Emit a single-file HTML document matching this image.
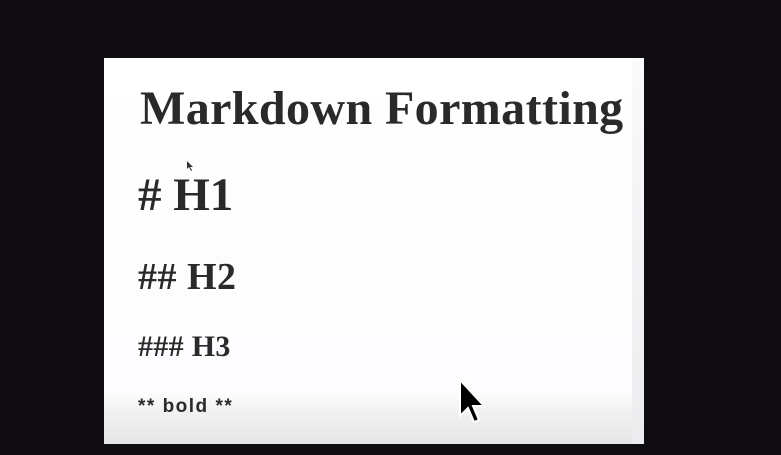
<!DOCTYPE html>
<html><head><style>
html,body{margin:0;padding:0;width:781px;height:455px;background:#0f0d11;overflow:hidden;position:relative}
.card{position:absolute;left:104px;top:58px;width:540px;height:386px;background:linear-gradient(to bottom,#fff 0,#fdfcfe 335px,#f3f3f4 350px,#e6e6e8 386px)}
.strip{position:absolute;left:632px;top:58px;width:12px;height:386px;background:linear-gradient(to bottom,#fafafb,#ececee)}
.t{position:absolute;font-family:"Liberation Serif",serif;font-weight:bold;color:#2a2a2c;white-space:nowrap;line-height:1}
</style></head><body>
<div class="card"></div>
<div class="strip"></div>
<div class="t" style="left:140px;top:85px;font-size:48px;letter-spacing:0.4px">Markdown Formatting</div>
<div class="t" style="left:138px;top:172px;font-size:47px">#&nbsp;H1</div>
<div class="t" style="left:138px;top:258px;font-size:38px;letter-spacing:0.5px">##&nbsp;H2</div>
<div class="t" style="left:138px;top:332px;font-size:30px;letter-spacing:0.3px">###&nbsp;H3</div>
<div class="t" style="left:138px;top:397px;font-size:19px;letter-spacing:1.5px;font-family:'Liberation Sans',sans-serif">** bold **</div>
<svg style="position:absolute;left:458px;top:378px" width="30" height="48" viewBox="0 0 30 48">
<path d="M2 2 L2 38 L10 30 L16 44 L21 42 L15 28 L26 28 Z" fill="#000" stroke="#fff" stroke-width="2"/>
</svg>
<svg style="position:absolute;left:186px;top:160px" width="8" height="12" viewBox="0 0 8 12">
<path d="M1 1 L1 9 L3 7 L5 11 L6 10 L4 7 L7 7 Z" fill="#333"/>
</svg>
</body></html>
